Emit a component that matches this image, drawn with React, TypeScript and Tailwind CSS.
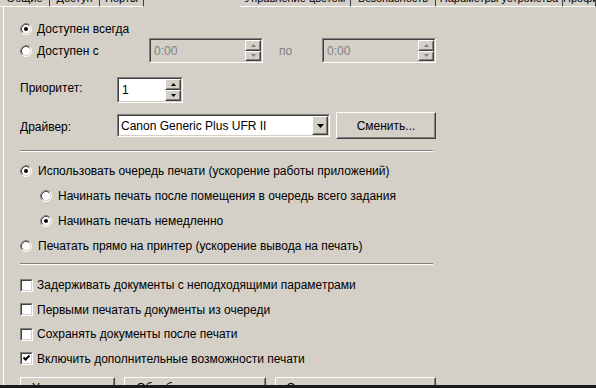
import React from 'react';

const tabs = [
  { label: 'Общие', w: 'w-[50px]' },
  { label: 'Доступ', w: 'w-[50px]' },
  { label: 'Порты', w: 'w-[44px]' },
  { label: 'Дополнительно', w: 'w-[96px]', active: true },
  { label: 'Управление цветом', w: 'w-[111px]' },
  { label: 'Безопасность', w: 'w-[85px]' },
  { label: 'Параметры устройства', w: 'w-[127px]' },
  { label: 'Профиль', w: 'w-[33px]' },
];

function Radio({ checked }: { checked?: boolean }) {
  return (
    <svg width="12" height="12" viewBox="0 0 12 12" className="shrink-0">
      <circle cx="6" cy="6" r="5" fill="#fff" />
      <path d="M2.11 9.89 A5.5 5.5 0 0 1 9.89 2.11" stroke="#808080" fill="none" />
      <path d="M2.82 9.18 A4.5 4.5 0 0 1 9.18 2.82" stroke="#404040" fill="none" />
      <path d="M9.89 2.11 A5.5 5.5 0 0 1 2.11 9.89" stroke="#fff" fill="none" />
      <path d="M9.18 2.82 A4.5 4.5 0 0 1 2.82 9.18" stroke="#d4d0c8" fill="none" />
      {checked && <circle cx="6" cy="6" r="2" fill="#000" />}
    </svg>
  );
}

function Check({ checked }: { checked?: boolean }) {
  return (
    <div className="w-[13px] h-[13px] shrink-0 border border-t-[#808080] border-l-[#808080] border-b-white border-r-white">
      <div className="w-full h-full border border-t-[#404040] border-l-[#404040] border-b-[#d4d0c8] border-r-[#d4d0c8] bg-white flex items-center justify-center">
        {checked && (
          <svg width="7" height="7" viewBox="0 0 7 7">
            <path d="M0.5 2.5 L2.5 4.5 L6.5 0.5" stroke="#000" strokeWidth="2" fill="none" />
          </svg>
        )}
      </div>
    </div>
  );
}

function Sunken({ className, inner, children }: { className: string; inner: string; children?: React.ReactNode }) {
  return (
    <div className={`border border-t-[#808080] border-l-[#808080] border-b-white border-r-white ${className}`}>
      <div className={`h-full flex items-center border border-t-[#404040] border-l-[#404040] border-b-[#d4d0c8] border-r-[#d4d0c8] ${inner}`}>
        {children}
      </div>
    </div>
  );
}

function Raised({ className, children }: { className: string; children?: React.ReactNode }) {
  return (
    <div className={`bg-[#d4d0c8] border border-t-white border-l-white border-b-[#404040] border-r-[#404040] ${className}`}>
      <div className="h-full flex items-center justify-center border border-t-[#d4d0c8] border-l-[#d4d0c8] border-b-[#808080] border-r-[#808080]">
        {children}
      </div>
    </div>
  );
}

function Arrow({ up, color }: { up?: boolean; color: string }) {
  return (
    <svg width="5" height="3" viewBox="0 0 5 3">
      <path d={up ? 'M2.5 0 L5 3 L0 3Z' : 'M0 0 L5 0 L2.5 3Z'} fill={color} />
    </svg>
  );
}

function SpinBox({ value, disabled, className }: { value: string; disabled?: boolean; className: string }) {
  const arrow = disabled ? '#808080' : '#000';
  return (
    <Sunken className={className} inner={disabled ? 'bg-[#d4d0c8]' : 'bg-white'}>
      <span className={`flex-1 pl-[3px] ${disabled ? 'text-[#808080]' : 'text-black'}`}>{value}</span>
      <div className="flex flex-col h-full w-[16px]">
        <Raised className="flex-1">
          <Arrow up color={arrow} />
        </Raised>
        <Raised className="flex-1">
          <Arrow color={arrow} />
        </Raised>
      </div>
    </Sunken>
  );
}

function Separator() {
  return <div className="w-[413px] border-t border-t-[#808080] border-b border-b-white" />;
}

const checks: [string, boolean][] = [
  ['Задерживать документы с неподходящими параметрами', false],
  ['Первыми печатать документы из очереди', false],
  ['Сохранять документы после печати', false],
  ['Включить дополнительные возможности печати', true],
];

export default function App() {
  return (
    <div className="w-[596px] h-[388px] bg-[#d4d0c8] overflow-hidden flex flex-col text-[12px] text-black font-['Liberation_Sans',Arial,sans-serif]">
      {/* tab strip, only the bottom edge is in view */}
      <div className="flex h-[7px] shrink-0">
        {tabs.map(t => (
          <div
            key={t.label}
            className={`${t.w} shrink-0 h-[7px] overflow-hidden text-[11px] leading-[12px] text-center ${
              t.active ? '' : 'border-r border-r-[#404040] border-b border-b-white'
            }`}
          >
            {!t.active && <div className="-mt-[8.5px] whitespace-nowrap">{t.label}</div>}
          </div>
        ))}
      </div>

      <div className="flex-1 min-h-0 overflow-hidden ml-[3px] border-l border-l-white pl-[16px]">
        <div className="mt-[15px] h-[14px] flex items-center">
          <Radio checked />
          <span className="ml-[5px]">Доступен всегда</span>
        </div>

        <div className="mt-[2px] h-[25px] flex items-center">
          <div className="w-[129px] flex items-center">
            <Radio />
            <span className="ml-[5px]">Доступен с</span>
          </div>
          <SpinBox value="0:00" disabled className="w-[114px] h-[25px]" />
          <span className="ml-[16px] w-[43px] text-[#808080]">по</span>
          <SpinBox value="0:00" disabled className="w-[114px] h-[25px]" />
        </div>

        <div className="mt-[14px] h-[26px] flex items-center">
          <span className="w-[97px] -mt-[4px]">Приоритет:</span>
          <SpinBox value="1" className="w-[66px] h-[26px]" />
        </div>

        <div className="mt-[9px] h-[27px] flex items-center">
          <span className="w-[97px] mt-[2px]">Драйвер:</span>
          <Sunken className="w-[213px] h-[23px]" inner="bg-white">
            <span className="flex-1 pl-[2px]">Canon Generic Plus UFR II</span>
            <Raised className="w-[16px] h-full">
              <svg width="7" height="4" viewBox="0 0 7 4">
                <path d="M0 0 L7 0 L3.5 4Z" fill="#000" />
              </svg>
            </Raised>
          </Sunken>
          <Raised className="ml-[6px] w-[100px] h-[27px]">Сменить...</Raised>
        </div>

        <div className="mt-[11px]">
          <Separator />
        </div>

        <div className="mt-[6px] h-[25px] flex items-center">
          <Radio checked />
          <span className="ml-[6px]">Использовать очередь печати (ускорение работы приложений)</span>
        </div>
        <div className="h-[25px] flex items-center pl-[20px]">
          <Radio />
          <span className="ml-[6px]">Начинать печать после помещения в очередь всего задания</span>
        </div>
        <div className="h-[25px] flex items-center pl-[20px]">
          <Radio checked />
          <span className="ml-[6px]">Начинать печать немедленно</span>
        </div>
        <div className="h-[25px] flex items-center">
          <Radio />
          <span className="ml-[6px]">Печатать прямо на принтер (ускорение вывода на печать)</span>
        </div>

        <div className="mt-[5px]">
          <Separator />
        </div>

        <div className="mt-[8px]">
          {checks.map(([label, on]) => (
            <div key={label} className="h-[24.5px] flex items-center">
              <Check checked={on} />
              <span className="ml-[4px]">{label}</span>
            </div>
          ))}
        </div>

        <div className="mt-[6px] flex gap-[9px]">
          <Raised className="w-[95px] h-[22px]">Умолчания...</Raised>
          <Raised className="w-[142px] h-[22px]">Обработчик печати...</Raised>
          <Raised className="w-[161px] h-[22px]">Страница-разделитель...</Raised>
        </div>
      </div>

      <div className="h-[3px] shrink-0 bg-[#1a1a1a]" />
    </div>
  );
}
